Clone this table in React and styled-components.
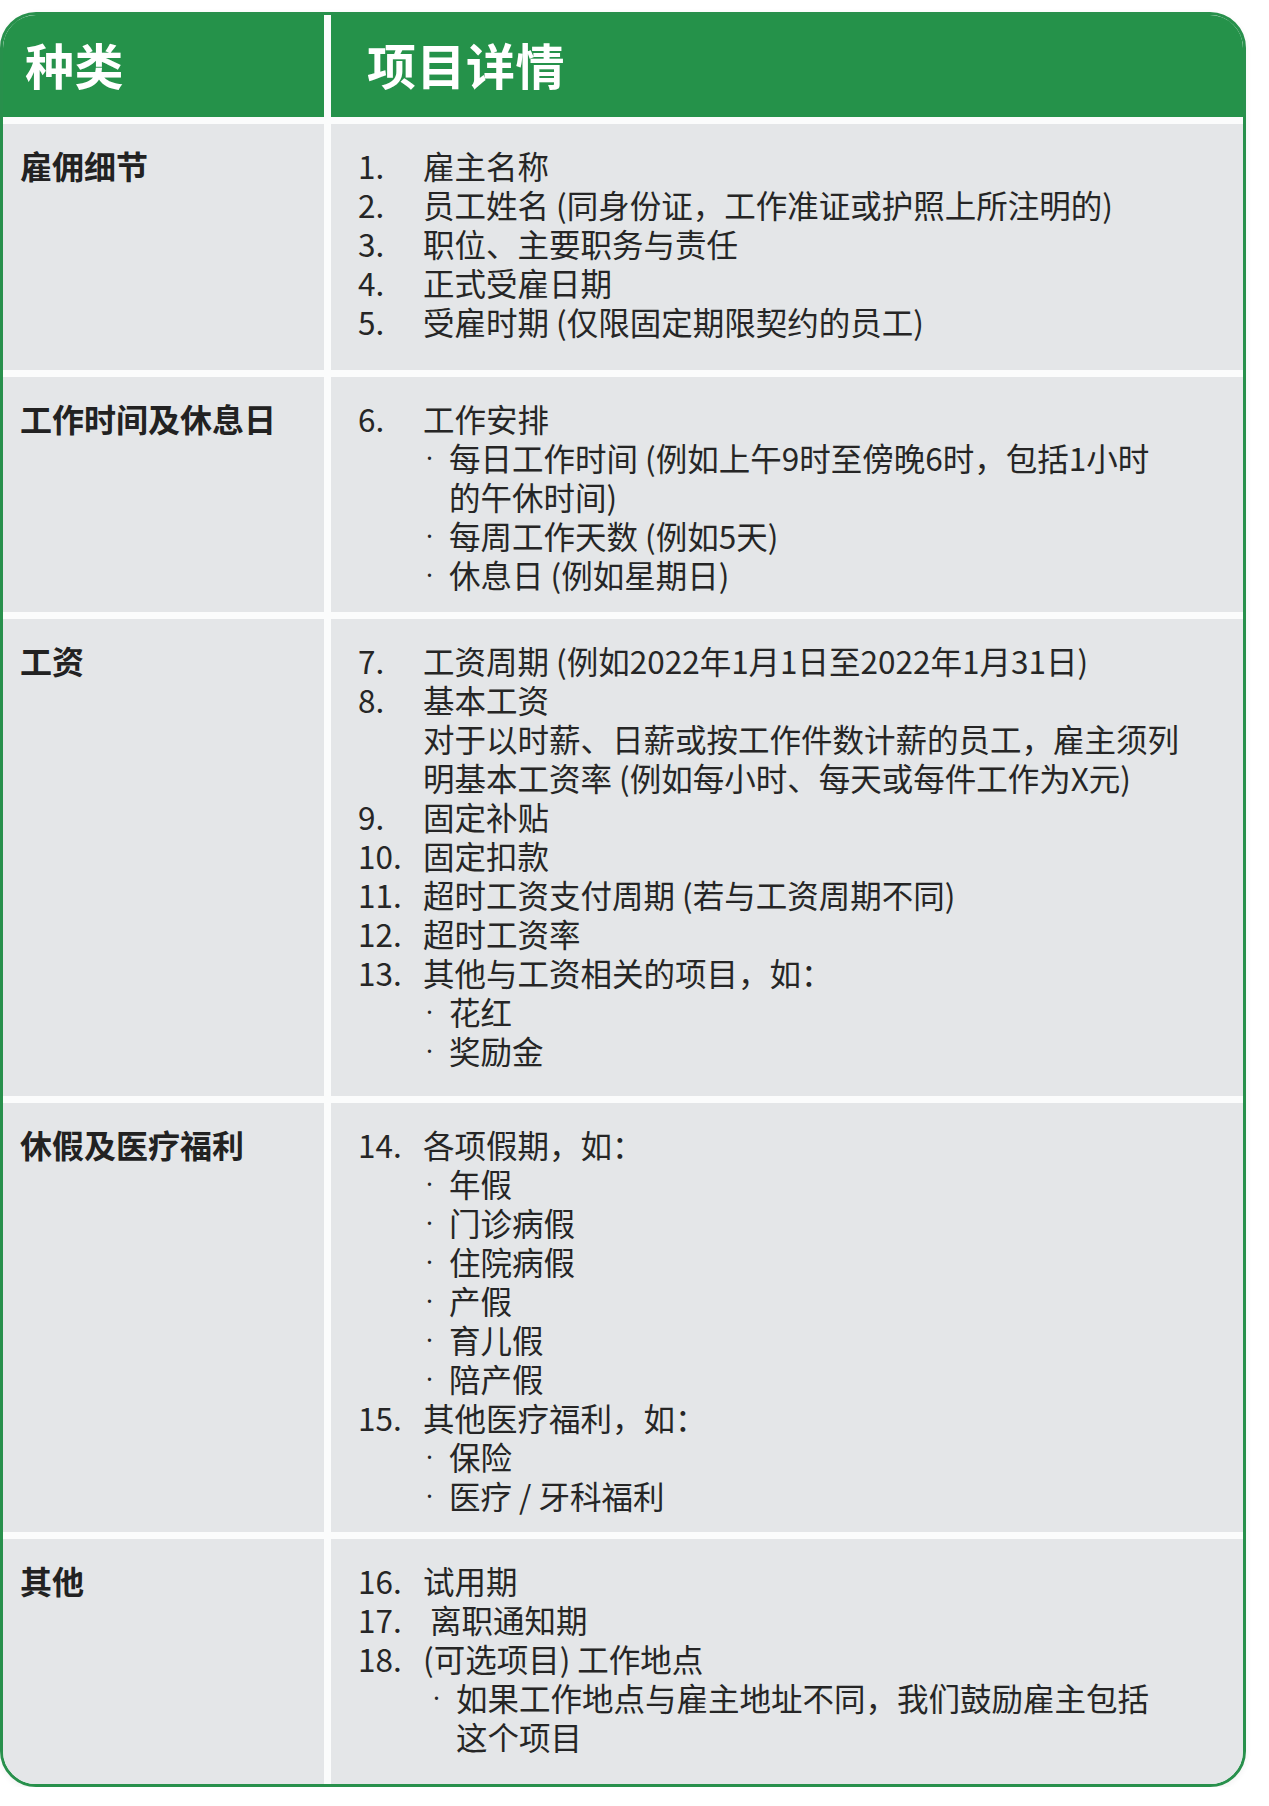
import React from 'react';
import styled, { createGlobalStyle } from 'styled-components';

const GlobalStyle = createGlobalStyle`
  html, body {
    margin: 0;
    padding: 0;
    background: #ffffff;
  }
  body {
    font-family: "Noto Sans CJK SC", "Noto Sans", sans-serif;
    color: #262626;
  }
`;

const Page = styled.div`
  width: 1269px;
  padding-top: 12px;
`;

const Table = styled.div`
  width: 1246px;
  box-sizing: border-box;
  border: 3px solid #28904c;
  border-radius: 36px;
  overflow: hidden;
  background: #fbfcfc;
  display: grid;
  grid-template-columns: 321px 912px;
  grid-template-rows: 102px 246px 235px 477px 429px 245px;
  column-gap: 7px;
  row-gap: 7px;
  box-shadow: 0 2px 6px rgba(0, 0, 0, 0.06);
`;

const HeadCell = styled.div`
  background: #25924a;
  color: #ffffff;
  font-size: 49px;
  font-weight: 700;
  display: flex;
  align-items: center;
  padding-left: ${(p) => p.$pad}px;
  padding-bottom: 2px;
  margin-top: -3px;
  letter-spacing: 0.5px;
`;

const LabelCell = styled.div`
  background: #e4e6e8;
  padding: 22px 0 0 17px;
  font-size: 32px;
  font-weight: 700;
  line-height: 39px;
  color: #222222;
`;

const DetailCell = styled.div`
  background: #e4e6e8;
  padding: 22px 0 0 27px;
  font-size: 31.5px;
  line-height: 39px;
`;

const Line = styled.div`
  display: flex;
  white-space: pre;
  margin-left: ${(p) => p.$indent || 0}px;
`;

const Num = styled.span`
  flex: none;
  width: 65px;
`;

const Dot = styled.span`
  flex: none;
  width: ${(p) => 26 + p.$shift}px;
  padding-left: ${(p) => 3 + p.$shift}px;
  box-sizing: border-box;
  font-family: "Noto Sans", "DejaVu Sans", sans-serif;
  font-size: 26px;
`;

const rows = [
  {
    label: '雇佣细节',
    lines: [
      { n: '1.', t: '雇主名称' },
      { n: '2.', t: '员工姓名 (同身份证，工作准证或护照上所注明的)' },
      { n: '3.', t: '职位、主要职务与责任' },
      { n: '4.', t: '正式受雇日期' },
      { n: '5.', t: '受雇时期 (仅限固定期限契约的员工)' },
    ],
  },
  {
    label: '工作时间及休息日',
    lines: [
      { n: '6.', t: '工作安排' },
      { b: ['每日工作时间 (例如上午9时至傍晚6时，包括1小时', '的午休时间)'] },
      { b: ['每周工作天数 (例如5天)'] },
      { b: ['休息日 (例如星期日)'] },
    ],
  },
  {
    label: '工资',
    lines: [
      { n: '7.', t: '工资周期 (例如2022年1月1日至2022年1月31日)' },
      { n: '8.', t: '基本工资' },
      { t: '对于以时薪、日薪或按工作件数计薪的员工，雇主须列' },
      { t: '明基本工资率 (例如每小时、每天或每件工作为X元)' },
      { n: '9.', t: '固定补贴' },
      { n: '10.', t: '固定扣款' },
      { n: '11.', t: '超时工资支付周期 (若与工资周期不同)' },
      { n: '12.', t: '超时工资率' },
      { n: '13.', t: '其他与工资相关的项目，如：' },
      { b: ['花红'] },
      { b: ['奖励金'] },
    ],
  },
  {
    label: '休假及医疗福利',
    lines: [
      { n: '14.', t: '各项假期，如：' },
      { b: ['年假'] },
      { b: ['门诊病假'] },
      { b: ['住院病假'] },
      { b: ['产假'] },
      { b: ['育儿假'] },
      { b: ['陪产假'] },
      { n: '15.', t: '其他医疗福利，如：' },
      { b: ['保险'] },
      { b: ['医疗 / 牙科福利'] },
    ],
  },
  {
    label: '其他',
    lines: [
      { n: '16.', t: '试用期' },
      { n: '17.', t: ' 离职通知期' },
      { n: '18.', t: '(可选项目) 工作地点' },
      { b: ['如果工作地点与雇主地址不同，我们鼓励雇主包括', '这个项目'], shift: 7 },
    ],
  },
];

const renderLine = (line, i) => {
  if (line.b) {
    const shift = line.shift || 0;
    return (
      <React.Fragment key={i}>
        <Line $indent={65}>
          <Dot $shift={shift}>·</Dot>
          <span>{line.b[0]}</span>
        </Line>
        {line.b.slice(1).map((t, j) => (
          <Line key={j} $indent={91 + shift}>
            {t}
          </Line>
        ))}
      </React.Fragment>
    );
  }
  if (line.n) {
    return (
      <Line key={i}>
        <Num>{line.n}</Num>
        <span>{line.t}</span>
      </Line>
    );
  }
  return (
    <Line key={i} $indent={65}>
      {line.t}
    </Line>
  );
};

const App = () => (
  <Page>
    <GlobalStyle />
    <Table>
      <HeadCell $pad={22}>种类</HeadCell>
      <HeadCell $pad={36}>项目详情</HeadCell>
      {rows.map((row) => (
        <React.Fragment key={row.label}>
          <LabelCell>{row.label}</LabelCell>
          <DetailCell>{row.lines.map(renderLine)}</DetailCell>
        </React.Fragment>
      ))}
    </Table>
  </Page>
);

export default App;
